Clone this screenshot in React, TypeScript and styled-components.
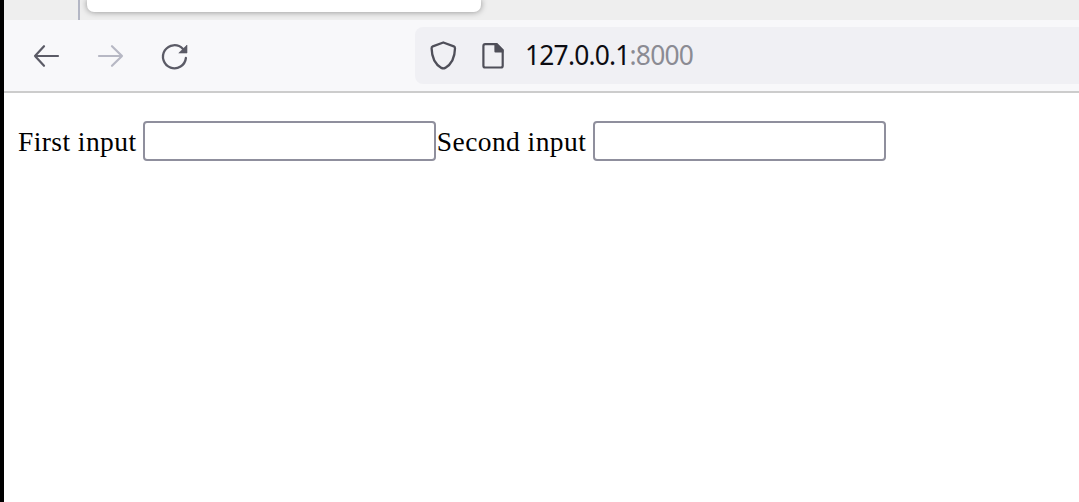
import React from "react";
import styled, { createGlobalStyle } from "styled-components";

const GlobalStyle = createGlobalStyle`
  * { box-sizing: border-box; }
  body { margin: 0; background: #fff; overflow: hidden; }
`;

const Window = styled.div`
  display: flex;
  flex-direction: column;
  width: 1079px;
  height: 502px;
  overflow: hidden;
  border-left: 4px solid #000;
  background: #fff;
`;

const TabStrip = styled.div`
  display: flex;
  align-items: flex-start;
  flex: none;
  height: 20px;
  padding-left: 74px;
  overflow: hidden;
  background: #eee;
`;

const TabSeparator = styled.div`
  width: 2px;
  height: 20px;
  background: #b3b6c4;
`;

const ActiveTab = styled.div`
  width: 394px;
  height: 12px;
  margin-left: 7px;
  border-radius: 0 0 7px 7px;
  background: #fff;
  box-shadow: 0 0 6px rgba(0, 0, 0, 0.42);
`;

const Toolbar = styled.div`
  display: flex;
  align-items: center;
  flex: none;
  height: 73px;
  padding-left: 26px;
  border-bottom: 2px solid #ccc;
  background: #f8f8fa;
`;

const NavButtons = styled.div`
  display: flex;
  gap: 32px;
  width: 385px;
`;

const NavButton = styled.button<{ $muted?: boolean }>`
  display: flex;
  width: 32px;
  height: 32px;
  padding: 0;
  border: 0;
  background: none;
  color: ${(p) => (p.$muted ? "#b7b8c4" : "#5b5b66")};
`;

const AddressBar = styled.div`
  display: flex;
  align-items: center;
  flex: 1;
  height: 57px;
  padding-left: 12px;
  border-radius: 8px 0 0 8px;
  background: #f0f0f4;
  color: #4f4f59;
`;

const Address = styled.span`
  margin-left: 16px;
  padding-bottom: 2px;
  font: 26.4px/36px "Noto Sans", sans-serif;
  letter-spacing: -0.8px;
  color: #0c0c12;
  white-space: pre;
`;

const Port = styled.span`
  color: #8b8b93;
`;

const Page = styled.main`
  display: flex;
  align-items: center;
  height: 40px;
  margin-top: 28px;
  padding-left: 14px;
  font: 27.5px/32px "Liberation Serif", serif;
  letter-spacing: 0.42px;
  color: #000;
`;

const Field = styled.label`
  display: flex;
  align-items: center;
  white-space: nowrap;
`;

const Caption = styled.span<{ $width: number; $inset?: number }>`
  width: ${(p) => p.$width}px;
  padding: 2px 0 0 ${(p) => p.$inset ?? 0}px;
`;

const TextInput = styled.input`
  width: 293px;
  height: 40px;
  padding: 2px 4px;
  border: 2px solid #8f8f9d;
  border-radius: 4px;
  background: #fff;
  font: inherit;
  outline: none;
`;

const ArrowIcon = ({ forward = false }: { forward?: boolean }) => (
  <svg width="32" height="32" viewBox="0 0 32 32" fill="none" stroke="currentColor" strokeWidth="2.2" strokeLinecap="round" strokeLinejoin="round">
    <path d={forward ? "M5 16H28M18 6.2L28 16L18 25.8" : "M28 16H5M14 6.2L5 16L14 25.8"} />
  </svg>
);

const ReloadIcon = () => (
  <svg width="32" height="32" viewBox="0 0 32 32">
    <path d="M27.9 18A11.5 11.5 0 1 1 24.8 8.8" fill="none" stroke="currentColor" strokeWidth="2.3" strokeLinecap="round" />
    <path d="M29 5V13H20.8Z" fill="currentColor" stroke="currentColor" strokeWidth="0.6" strokeLinejoin="round" />
  </svg>
);

const ShieldIcon = () => (
  <svg width="32" height="32" viewBox="0 0 32 32" fill="none" stroke="currentColor" strokeWidth="2.3" strokeLinejoin="round">
    <path d="M16.3 2.5L26.8 6.3Q28.1 6.9 28 8.4C27.8 17.4 24.7 24.2 18.2 27.9Q16.3 28.8 14.4 27.9C7.9 24.2 4.8 17.4 4.6 8.4Q4.5 6.9 5.8 6.3Z" />
  </svg>
);

const PageIcon = () => (
  <svg width="50" height="32" viewBox="0 0 50 32">
    <path d="M26.2 4.2H37.7L43.7 10.2V25.7A1.8 1.8 0 0 1 41.9 27.5H26.2A1.8 1.8 0 0 1 24.4 25.7V6A1.8 1.8 0 0 1 26.2 4.2Z" fill="none" stroke="currentColor" strokeWidth="2.2" />
    <path d="M35.4 3.6H38.2L44.4 9.8V12.4H36.4Q35.4 12.4 35.4 11.4Z" fill="currentColor" />
  </svg>
);

export default function App() {
  return (
    <>
      <GlobalStyle />
      <Window>
        <TabStrip>
          <TabSeparator />
          <ActiveTab />
        </TabStrip>
        <Toolbar>
          <NavButtons>
            <NavButton aria-label="Back"><ArrowIcon /></NavButton>
            <NavButton aria-label="Forward" $muted><ArrowIcon forward /></NavButton>
            <NavButton aria-label="Reload"><ReloadIcon /></NavButton>
          </NavButtons>
          <AddressBar>
            <ShieldIcon />
            <PageIcon />
            <Address>127.0.0.1<Port>:8000</Port></Address>
          </AddressBar>
        </Toolbar>
        <Page>
          <Field><Caption $width={125}>First input</Caption><TextInput type="text" /></Field>
          <Field><Caption $width={157} $inset={0.8}>Second input</Caption><TextInput type="text" /></Field>
        </Page>
      </Window>
    </>
  );
}
